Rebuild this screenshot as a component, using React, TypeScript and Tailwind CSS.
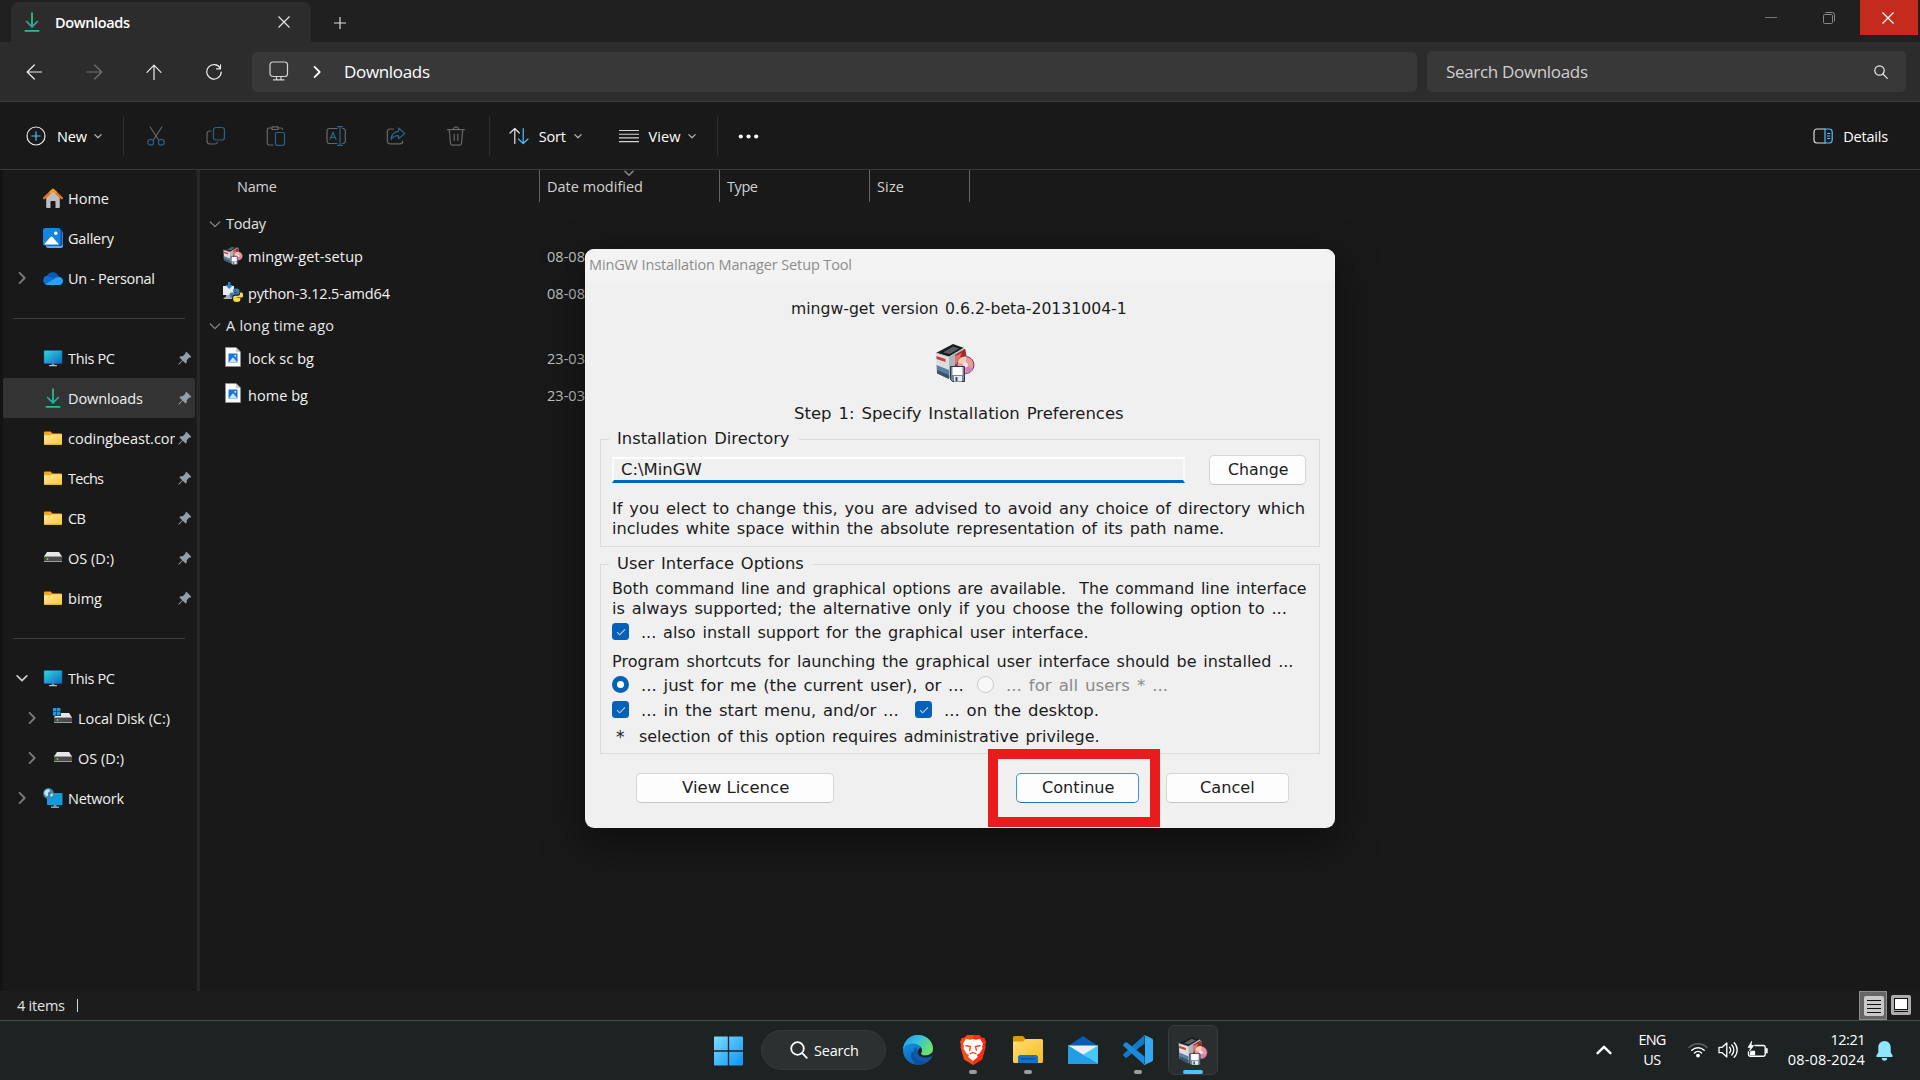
import React, { useLayoutEffect, useRef, useState } from "react";

/* Text tracked so that it spans exactly `w` pixels. */
function T({ w, className = "", children }: { w: number; className?: string; children: string }) {
  const ref = useRef<HTMLSpanElement>(null);
  const [spacing, setSpacing] = useState(0);
  useLayoutEffect(() => {
    const el = ref.current;
    if (!el) return;
    el.style.letterSpacing = "0px";
    const natural = el.getBoundingClientRect().width;
    const next = (w - natural) / Math.max(1, children.length - 1);
    el.style.letterSpacing = `${next}px`;
    setSpacing(next);
  }, [w, children]);
  return (
    <span ref={ref} className={`inline-block shrink-0 whitespace-pre ${className}`} style={{ letterSpacing: spacing }}>
      {children}
    </span>
  );
}

/* Text stretched horizontally to `w` pixels, as legacy dialogs are when scaled. */
function S({ w, className = "", children }: { w: number; className?: string; children: string }) {
  const ref = useRef<HTMLSpanElement>(null);
  const [scale, setScale] = useState(1);
  useLayoutEffect(() => {
    if (ref.current) setScale(w / ref.current.offsetWidth);
  }, [w, children]);
  return (
    <span className={`flex shrink-0 ${className}`} style={{ width: w }}>
      <span ref={ref} className="inline-block shrink-0 origin-left whitespace-pre" style={{ transform: `scaleX(${scale})` }}>
        {children}
      </span>
    </span>
  );
}

type IconProps = { className?: string };

const line = { fill: "none", strokeLinecap: "round", strokeLinejoin: "round" } as const;

function DownloadIcon({ className = "" }: IconProps) {
  return (
    <svg viewBox="0 0 16 20" className={`h-5 w-4 shrink-0 ${className}`} {...line} strokeWidth="1.7">
      <path d="M8 1v13.5" stroke="#2cc68c" />
      <path d="M2.6 9.5L8 14.8l5.4-5.3" stroke="#1fb39c" />
      <path d="M1.4 18.9h13.2" stroke="#25c193" />
    </svg>
  );
}

function Chevron({ className = "", dir = "down", size = 8 }: IconProps & { dir?: "down" | "right" | "up"; size?: number }) {
  const d = dir === "down" ? "M1 3.2L5 7.2L9 3.2" : dir === "up" ? "M1 7L5 3L9 7" : "M3 0.8L7.2 5L3 9.2";
  return (
    <svg viewBox="0 0 10 10" width={size} height={size} className={`shrink-0 ${className}`} {...line} stroke="currentColor" strokeWidth="1.5">
      <path d={d} />
    </svg>
  );
}

function CloseGlyph({ className = "" }: IconProps) {
  return (
    <svg viewBox="0 0 12 12" className={`h-3 w-3 shrink-0 ${className}`} stroke="currentColor" strokeWidth="1.2" fill="none">
      <path d="M.5.5l11 11M11.5.5l-11 11" />
    </svg>
  );
}

function HomeIcon() {
  return (
    <svg viewBox="0 0 20 20" className="h-5 w-5">
      <path d="M3.2 9.5L10 3l6.8 6.5V19a1 1 0 0 1-1 1h-3.300v-6.200a.8.800 0 0 0-.8-.8H8.300a.8.800 0 0 0-.8.8V20H4.200a1 1 0 0 1-1-1z" fill="#bdbdbd" />
      <path d="M1.200 10.200L10 1.800l8.800 8.400" fill="none" stroke="#e8701e" strokeWidth="2.400" strokeLinecap="round" strokeLinejoin="round" />
      <path d="M6.500 5L10 1.800 13.500 5" fill="none" stroke="#f89c22" strokeWidth="2.200" strokeLinejoin="round" />
    </svg>
  );
}

function GalleryIcon() {
  return (
    <svg viewBox="0 0 20 20" className="h-5 w-5">
      <rect x="3" y="3" width="17" height="17" rx="2" fill="#6aa7e8" />
      <rect x="3" y="2" width="16.500" height="16" rx="2" fill="#0b4fa3" />
      <rect x="0" y="0" width="17.500" height="17.500" rx="2" fill="#1286dc" />
      <path d="M1 16.500L7.500 9a1.500 1.500 0 0 1 2 0l6.500 7.500z" fill="#fff" />
      <circle cx="12.800" cy="5.300" r="1.700" fill="#fff" />
    </svg>
  );
}

function CloudIcon() {
  return (
    <svg viewBox="0 0 20 15" className="h-[15px] w-5">
      <path d="M5 14a4.700 4.700 0 0 1-1-9.300A6.500 6.500 0 0 1 15.500 5.500 4.200 4.200 0 0 1 16 14z" fill="#0f6fd0" />
      <path d="M4 4.700A6.500 6.500 0 0 1 15.500 5.500c-2-.2-3.500.6-4.500 1.500z" fill="#0a58b8" />
      <path d="M2.500 13.200L12 7.500c2.300-1.500 5.600-1.700 7 .6 1.800 3 .2 5.900-3 5.900H5c-1 0-1.800-.3-2.500-.8z" fill="#28a4ee" />
    </svg>
  );
}

function PcIcon() {
  return (
    <svg viewBox="0 0 20 17" className="h-[17px] w-5">
      <defs>
        <linearGradient id="pc" x1="0" y1="0" x2="1" y2="1">
          <stop offset="0" stopColor="#35d6e0" />
          <stop offset="1" stopColor="#0b6bc4" />
        </linearGradient>
      </defs>
      <rect x="1" y="0.500" width="18" height="13" rx="0.800" fill="url(#pc)" stroke="#0d6aa8" strokeWidth="0.600" />
      <path d="M8.500 13.500h3v1.700h-3z" fill="#7b8a94" />
      <rect x="6" y="15" width="8" height="1.300" rx=".4" fill="#b3bcc4" />
    </svg>
  );
}

function FolderIcon() {
  return (
    <svg viewBox="0 0 20 16" className="h-4 w-5">
      <defs>
        <linearGradient id="fd" x1="0" y1="0" x2="1" y2="1">
          <stop offset="0" stopColor="#ffe9a0" />
          <stop offset="1" stopColor="#fcc63a" />
        </linearGradient>
      </defs>
      <path d="M1 2.500a1 1 0 0 1 1-1h5.500L9.500 3.500H18a1 1 0 0 1 1 1V13H1z" fill="#f0ab16" />
      <path d="M1 5.200h7l1.500-1H18a1 1 0 0 1 1 1V14a1 1 0 0 1-1 1H2a1 1 0 0 1-1-1z" fill="url(#fd)" />
      <path d="M1 14.400h18" stroke="#e5a91e" strokeWidth="0.900" />
    </svg>
  );
}

function DriveIcon({ windows = false }: { windows?: boolean }) {
  return (
    <svg viewBox="0 0 20 18" className={`h-[18px] w-5 ${windows ? "-mt-1" : "-mt-1.5"}`}>
      <path d="M4 6h12l3 4.500H1z" fill="#e6e6e6" />
      <rect x="1" y="10" width="18" height="6" rx="0.800" fill="#4a4a4a" />
      <path d="M1 10.500h18M1 15.500h18" stroke="#a8a8a8" strokeWidth="0.900" />
      <circle cx="4.500" cy="13" r="0.900" fill="#4ade60" />
      {windows && (
        <g>
          <path d="M0 1h8v8H0z" fill="#191919" />
          <path d="M0 1h3.400v3.400H0zM4 1h3.400v3.400H4zM0 5h3.400v3.400H0zM4 5h3.400v3.400H4z" fill="#1c9ae8" />
        </g>
      )}
    </svg>
  );
}

function NetworkIcon() {
  return (
    <svg viewBox="0 0 20 20" className="h-5 w-5">
      <rect x="4" y="5" width="15.500" height="12" rx="0.800" fill="#149bd4" />
      <path d="M10.500 17h3v1.800h-3z" fill="#7b8a94" />
      <rect x="8" y="18.600" width="8" height="1.200" fill="#b3bcc4" />
      <circle cx="5.500" cy="5.500" r="5.400" fill="#3a86b4" />
      <path d="M1.500 3.500C3.500.5 7 1 7 2.500S4.500 4 5 6s-1 3-2 2-2.500-3-1.500-4.500zM8 6c1-1 2.500-.5 2 .8S8 9.500 7.500 8.500 7 7 8 6z" fill="#c6e2ee" />
    </svg>
  );
}

function PinIcon() {
  return (
    <svg viewBox="0 0 14 14" className="h-3.5 w-3.5" fill="#959ea4">
      <path d="M8.400.8L13.200 5.600 12.300 6.700 11.400 6.500 8.900 9l-.3 2.700-1 .9L4.700 9.700 1.200 13.400.5 13.500.6 12.800 4.300 9.300 1.400 6.400l.9-1L5 5.100 7.500 2.600 7.300 1.700z" />
    </svg>
  );
}

function SetupIcon({ className = "" }: IconProps) {
  return (
    <svg viewBox="0 0 40 40" className={className}>
      <path d="M13 14L29 5l2 2v20L13 36z" fill="#aeb4bb" />
      <path d="M1 10L14 14v22L2 30z" fill="#dcdee2" />
      <path d="M1 10L18 1l11 4-15 9z" fill="#1a1c1f" />
      <path d="M8 9.500L18 3.500l6 2-9 5.500z" fill="#5a5e62" />
      <path d="M1 10l13 4 15-9" fill="none" stroke="#c9ccd0" strokeWidth="1" />
      <path d="M1.500 13l9 3v3l-9-3z" fill="#d63a36" />
      <path d="M1.500 22l12.500 5v9L2 30z" fill="#5f7f9f" />
      <path d="M2 27l12 5v4L2 30.500z" fill="#3b556f" />
      <path d="M20 12l10-6 2 9-6 9-6 0z" fill="#a6272c" />
      <path d="M20 13l7-3-2 4 4 0-6 8-3-1z" fill="#e2746a" />
      <circle cx="30.500" cy="22" r="8.500" fill="#e79aa2" stroke="#6c3a44" strokeWidth="1" />
      <path d="M30.500 22l-8-3a8.500 8.500 0 0 1 9-5.500z" fill="#f6cdb2" />
      <path d="M30.500 22l7.500 4a8.500 8.500 0 0 1-6 4z" fill="#cf7fc0" />
      <circle cx="30.500" cy="22" r="2.500" fill="#f6e4ea" />
      <path d="M15.500 23.500h14v15h-12l-2-2z" fill="#74879a" stroke="#2c3843" strokeWidth="1" />
      <path d="M17.500 24h10v8h-10z" fill="#fff" />
      <path d="M19 33h8v5.500h-8z" fill="#e8ebee" />
      <path d="M20.500 34h2v4h-2z" fill="#3a4c60" />
    </svg>
  );
}

function PythonIcon() {
  return (
    <svg viewBox="0 0 20 20" className="h-5 w-5">
      <path d="M0 4h11v9H0z" fill="#e8ecef" />
      <path d="M2 15h7v2H0zM3 13h4v2H3z" fill="#aab0b5" />
      <path d="M5 0h2.500v3H10L6.200 7 2.500 3H5z" fill="#1d86d0" />
      <path d="M12.500 6.500c-2 0-2.500.8-2.500 2V10h4v.6H8.500C7 10.600 6.500 12 6.500 13.300S7.200 16 8.500 16h1v-1.500c0-1.200 1-2 2.200-2h3c1 0 1.800-.8 1.800-1.800V8.500c0-1.500-1.300-2-4-2z" fill="#3b7db4" />
      <path d="M17 10.500v1.300c0 1.300-1 2-2 2h-3c-1 0-1.800.7-1.800 1.700v2.200c0 1.300 1.300 2.300 3.600 2.300s3.500-.8 3.500-2V16h-3.500v-.6H19c1 0 1-1 1-2.300 0-1.600-.4-2.600-1.500-2.600z" fill="#fbd848" />
    </svg>
  );
}

function ImageFileIcon() {
  return (
    <svg viewBox="0 0 16 20" className="h-5 w-4">
      <path d="M.5.5h10.500l4.500 4.500v14.500H.5z" fill="#fafafa" stroke="#8e8e8e" strokeWidth="0.900" />
      <path d="M11 .5V5h4.500z" fill="#c9c9c9" />
      <rect x="3.500" y="6.500" width="9" height="9" rx="0.600" fill="#1677d6" />
      <path d="M4 15.200l3.500-4.500a.7.700 0 0 1 1 0l3.700 4.500z" fill="#cfe6fa" />
      <circle cx="10.300" cy="8.800" r="0.900" fill="#fff" />
    </svg>
  );
}

type SideItem = { label: string; w: number; icon: React.ReactNode; pin?: boolean; nested?: boolean; chevron?: "right" | "down"; selected?: boolean };

const quick: SideItem[] = [
  { label: "Home", w: 41, icon: <HomeIcon /> },
  { label: "Gallery", w: 46, icon: <GalleryIcon /> },
  { label: "Un - Personal", w: 87, icon: <CloudIcon />, chevron: "right" },
];
const pinned: SideItem[] = [
  { label: "This PC", w: 47, icon: <PcIcon />, pin: true },
  { label: "Downloads", w: 75, icon: <DownloadIcon />, pin: true, selected: true },
  { label: "codingbeast.com", w: 115, icon: <FolderIcon />, pin: true },
  { label: "Techs", w: 36, icon: <FolderIcon />, pin: true },
  { label: "CB", w: 18, icon: <FolderIcon />, pin: true },
  { label: "OS (D:)", w: 46, icon: <DriveIcon />, pin: true },
  { label: "bimg", w: 34, icon: <FolderIcon />, pin: true },
];
const tree: SideItem[] = [
  { label: "This PC", w: 47, icon: <PcIcon />, chevron: "down" },
  { label: "Local Disk (C:)", w: 92, icon: <DriveIcon windows />, nested: true, chevron: "right" },
  { label: "OS (D:)", w: 46, icon: <DriveIcon />, nested: true, chevron: "right" },
  { label: "Network", w: 56, icon: <NetworkIcon />, chevron: "right" },
];

function SideRow({ item }: { item: SideItem }) {
  return (
    <div className={`flex h-10 w-48 items-center ${item.selected ? "rounded-xs bg-[#333333]" : ""} ${item.nested ? "pl-[10px]" : ""}`}>
      <div className="flex w-10 shrink-0 items-center justify-center pr-[3px]">
        {item.chevron && <Chevron dir={item.chevron} size={12} className={item.chevron === "down" ? "text-[#c8c8c8]" : "text-[#7d7d7d]"} />}
      </div>
      <div className="flex w-5 shrink-0 items-center justify-center">{item.icon}</div>
      <div className={`mt-[2px] ml-[5px] flex overflow-hidden ${item.pin ? "w-[107px]" : ""}`}>
        <T w={item.w}>{item.label}</T>
      </div>
      {item.pin && (
        <div className="ml-[3px]">
          <PinIcon />
        </div>
      )}
    </div>
  );
}

function SideDivider() {
  return (
    <div className="flex h-10 items-center pl-[10px]">
      <div className="h-px w-[172px] bg-[#3c3c3c]" />
    </div>
  );
}

function GroupRow({ label, w }: { label: string; w: number }) {
  return (
    <div className="flex h-7 items-center pl-[9px] text-[#e4e4e4]">
      <Chevron size={12} className="text-[#8e8e8e] [stroke-width:1]" />
      <T w={w} className="ml-[5px]">{label}</T>
    </div>
  );
}

function FileRow({ icon, label, w, date, height = "h-[36.5px]" }: { icon: React.ReactNode; label: string; w: number; date: string; height?: string }) {
  return (
    <div className={`flex items-center pl-[23px] ${height}`}>
      <div className="mb-[3px] flex w-5 justify-center">{icon}</div>
      <div className="mt-[2px] ml-[5px] w-[299px] text-[#f2f2f2]">
        <T w={w}>{label}</T>
      </div>
      <T w={38} className="mt-[2px] text-[#c0c0c0]">{date}</T>
    </div>
  );
}

function HeaderCell({ width, label, w }: { width: string; label: string; w: number }) {
  return (
    <div className={`flex h-8 items-center border-r border-[#636363] pl-[7px] text-[#d2d2d2] ${width}`}>
      <T w={w} className="mt-px">{label}</T>
    </div>
  );
}

function Separator({ className = "" }: IconProps) {
  return <div className={`h-10 w-px shrink-0 bg-[#2e2e2e] ${className}`} />;
}

function ToolIcon({ children, className = "" }: { children: React.ReactNode; className?: string }) {
  return (
    <svg viewBox="0 0 20 20" className={`h-5 w-5 shrink-0 ${className}`} {...line} strokeWidth="1.2">
      {children}
    </svg>
  );
}

const dim = "#666666";
const dimBlue = "#2c6183";

function CommandBar() {
  return (
    <div className="flex h-[68px] items-center border-b border-[#3a3a3a] bg-[#191919] pt-px pl-[26px] text-white">
      <ToolIcon>
        <circle cx="10" cy="10" r="9" stroke="#e6e6e6" />
        <path d="M10 5.800v8.400M5.800 10h8.400" stroke="#4cc2ff" />
      </ToolIcon>
      <T w={30} className="mt-px ml-[11px]">New</T>
      <Chevron className="ml-[7px] text-[#b5b5b5]" />
      <Separator className="ml-[21px]" />
      <ToolIcon className="ml-[22px]">
        <path d="M4.200 1L12.600 14M15.800 1L7.400 14" stroke={dim} />
        <circle cx="4.700" cy="16.300" r="2.900" stroke={dimBlue} />
        <circle cx="15.300" cy="16.300" r="2.900" stroke={dimBlue} />
      </ToolIcon>
      <ToolIcon className="ml-10">
        <path d="M5 5H3.500A2.500 2.500 0 0 0 1 7.500V15a3 3 0 0 0 3 3h5a2.500 2.500 0 0 0 2.500-2" stroke={dim} />
        <rect x="7.500" y="1.500" width="11" height="12.500" rx="2.500" stroke={dimBlue} />
      </ToolIcon>
      <ToolIcon className="ml-10">
        <path d="M7 19H3a1.700 1.700 0 0 1-1.700-1.700V3.700A1.700 1.700 0 0 1 3 2h2.500M12.500 2H15a1.700 1.700 0 0 1 1.600 1.500M6 .8h6v2.700H6z" stroke={dim} />
        <rect x="9.500" y="6.500" width="9" height="12.800" rx="1.500" stroke={dimBlue} />
      </ToolIcon>
      <ToolIcon className="ml-10">
        <path d="M11 2.500H3.500A2.500 2.500 0 0 0 1 5v10a2.500 2.500 0 0 0 2.500 2.500H11M16.500 2.500A2.500 2.500 0 0 1 19.300 5v10a2.500 2.500 0 0 1-2.800 2.500" stroke={dim} />
        <path d="M4 13.500L7 6.200l3 7.300M5 11.300h4M11.500.6h5M11.500 19.400h5M14 .6v18.800" stroke={dimBlue} />
      </ToolIcon>
      <ToolIcon className="ml-10">
        <path d="M7.500 3H4a2.700 2.700 0 0 0-2.700 2.700V15A2.700 2.700 0 0 0 4 17.800h10a2.700 2.700 0 0 0 2.700-2.600" stroke={dim} />
        <path d="M12.500 2l6.300 5.500-6.300 5.300V9.700C9 9.600 6.800 10.800 5 13.300 5.500 9 8 5.800 12.500 5.400z" stroke={dimBlue} />
      </ToolIcon>
      <ToolIcon className="ml-10">
        <path d="M1.500 3.700h17M7.500 3.500A2.500 2.500 0 0 1 12.500 3.500M3.300 4l1.200 13.300a2 2 0 0 0 2 1.900h7a2 2 0 0 0 2-1.900L16.700 4M8.200 8v6.500M11.800 8v6.500" stroke={dim} />
      </ToolIcon>
      <Separator className="ml-[23px]" />
      <ToolIcon className="ml-[19px]">
        <path d="M5.800 17.500V2.500M1 7L5.800 2.500 10.300 7" stroke="#e6e6e6" />
        <path d="M14.200 2.500v15M9.500 13l4.700 4.500L19 13" stroke="#4cc2ff" />
      </ToolIcon>
      <T w={27} className="mt-px ml-[10px]">Sort</T>
      <Chevron className="ml-[8px] text-[#b5b5b5]" />
      <svg viewBox="0 0 20 14" className="ml-[37px] h-3.5 w-5 shrink-0" stroke="#d4d4d4" strokeWidth="1.100">
        <path d="M0 1.500h20M0 5.200h20M0 8.900h20M0 12.600h20" />
      </svg>
      <T w={32} className="mt-px ml-[10px]">View</T>
      <Chevron className="ml-[7px] text-[#b5b5b5]" />
      <Separator className="ml-[21px]" />
      <svg viewBox="0 0 21 5" className="ml-[20px] h-[5px] w-[21px] shrink-0" fill="#fff">
        <circle cx="2.800" cy="2.500" r="2.100" />
        <circle cx="10.500" cy="2.500" r="2.100" />
        <circle cx="18.200" cy="2.500" r="2.100" />
      </svg>
      <div className="ml-auto flex items-center pr-[32px]">
        <ToolIcon>
          <path d="M12 3H4a3 3 0 0 0-3 3v8a3 3 0 0 0 3 3h8" stroke="#dcdcdc" />
          <path d="M12 3h4a3 3 0 0 1 3.200 3v8a3 3 0 0 1-3.200 3h-4zM14.500 7.500h2.300M14.500 10h2.300M14.500 12.500h2.300" stroke="#4cc2ff" />
        </ToolIcon>
        <T w={45} className="mt-px ml-[10px]">Details</T>
      </div>
    </div>
  );
}

function CheckBox() {
  return (
    <div className="flex h-[17px] w-[17px] shrink-0 items-center justify-center rounded-[3.5px] bg-[#0560b8]">
      <svg viewBox="0 0 10 8" className="h-2 w-2.5" fill="none" stroke="#b9d4ee" strokeWidth="1.100">
        <path d="M1 4.200l2.700 2.600L9 1.300" />
      </svg>
    </div>
  );
}

function DialogButton({ label, w, className }: { label: string; w: number; className: string }) {
  return (
    <button className={`flex shrink-0 items-center justify-center rounded-[5px] border bg-[#fdfdfd] ${className}`}>
      <S w={w}>{label}</S>
    </button>
  );
}

function Dialog() {
  return (
    <div className="absolute top-[249px] left-[585px] h-[579px] w-[750px] rounded-[9px] bg-[#f0f0f0] font-['DejaVu_Sans',sans-serif] text-[15px] leading-5 text-[#1c1c1c] shadow-[0_14px_40px_rgba(0,0,0,0.5)]">
      <div className="flex h-8 items-center rounded-t-[9px] bg-[#f3f3f3] pl-1 font-['Open_Sans',sans-serif] text-[14.500px] text-[#8d8d8d]">
        <T w={263}>MinGW Installation Manager Setup Tool</T>
      </div>
      <div className="[word-spacing:1.5px]">
        <div className="flex h-[55px] items-center pl-[206px]">
          <S w={336}>mingw-get version 0.6.2-beta-20131004-1</S>
        </div>
        <div className="mt-[7px] flex h-10 pl-[350px]">
          <SetupIcon className="h-10 w-10" />
        </div>
        <div className="mt-4 flex h-[30px] items-center pl-[209px]">
          <S w={330}>Step 1: Specify Installation Preferences</S>
        </div>
        <fieldset className="mx-[15px] h-[118px] border border-[#dcdcdc]">
          <legend className="ml-2 flex h-5 w-[190px] px-2">
            <S w={172}>Installation Directory</S>
          </legend>
          <div className="mt-[6px] flex pl-[11px]">
            <div className="mt-[2px] flex h-[26px] w-[573px] items-center border-t-2 border-r-2 border-b-[3px] border-l-2 border-t-white border-r-[#f8f9fb] border-b-[#0067c0] border-l-[#f8f9fb] pl-[7px]">
              <S w={81} className="mt-px">C:\MinGW</S>
            </div>
            <DialogButton label="Change" w={60} className="ml-6 h-[30px] w-[97px] border-[#d6d6d6] border-b-[#c4c4c4]" />
          </div>
          <div className="mt-[14px] flex flex-col pl-[11px]">
            <S w={693}>If you elect to change this, you are advised to avoid any choice of directory which</S>
            <S w={612}>includes white space within the absolute representation of its path name.</S>
          </div>
        </fieldset>
        <fieldset className="mx-[15px] mt-[7px] h-[200px] border border-[#dcdcdc] pl-[11px]">
          <legend className="-ml-[3px] flex h-5 w-[204px] px-2">
            <S w={187}>User Interface Options</S>
          </legend>
          <div className="mt-[5px] flex flex-col">
            <S w={695}>Both command line and graphical options are available.  The command line interface</S>
            <S w={675}>is always supported; the alternative only if you choose the following option to ...</S>
          </div>
          <div className="mt-1 flex h-5">
            <CheckBox />
            <S w={448} className="ml-3">... also install support for the graphical user interface.</S>
          </div>
          <div className="mt-[9px] flex h-5">
            <S w={682}>Program shortcuts for launching the graphical user interface should be installed ...</S>
          </div>
          <div className="mt-1 flex h-5">
            <div className="flex h-[17px] w-[17px] shrink-0 items-center justify-center rounded-full bg-[#0560b8]">
              <div className="h-[7px] w-[7px] rounded-full bg-white" />
            </div>
            <div className="ml-3 w-[336px]">
              <S w={323}>... just for me (the current user), or ...</S>
            </div>
            <div className="h-[17px] w-[17px] shrink-0 rounded-full border border-[#c8c8c8] bg-[#f8f8f8]" />
            <S w={162} className="ml-3 text-[#8b8b8b]">... for all users * ...</S>
          </div>
          <div className="mt-[5px] flex h-5">
            <CheckBox />
            <div className="ml-3 w-[274px]">
              <S w={258}>... in the start menu, and/or ...</S>
            </div>
            <CheckBox />
            <S w={155} className="ml-3">... on the desktop.</S>
          </div>
          <div className="mt-1.5 flex h-5">
            <span className="ml-1 w-[23px] shrink-0 text-[17px]">*</span>
            <S w={461}>selection of this option requires administrative privilege.</S>
          </div>
        </fieldset>
        <div className="mt-[19px] flex">
          <DialogButton label="View Licence" w={107} className="ml-[51px] h-[30px] w-[198px] border-[#d6d6d6] border-b-[#c4c4c4]" />
          <DialogButton label="Continue" w={72} className="ml-[182px] h-[30px] w-[123px] border-[#3f97dd] border-b-[#1b74c0]" />
          <DialogButton label="Cancel" w={55} className="ml-[27px] h-[30px] w-[123px] border-[#d6d6d6] border-b-[#c4c4c4]" />
        </div>
      </div>
      <div className="absolute top-[500px] left-[403px] h-[78px] w-[172px] border-10 border-[#e81c1c]" />
    </div>
  );
}

function TaskApp({ children, className = "", dot = "" }: { children: React.ReactNode; className?: string; dot?: string }) {
  return (
    <div className={`flex h-[50px] w-[50px] shrink-0 flex-col items-center rounded-md pt-[9px] ${className}`}>
      <div className="flex h-[32px] w-[30px] items-center justify-center">{children}</div>
      {dot && <div className={`mt-[4px] h-1 rounded-full ${dot}`} />}
    </div>
  );
}

function Taskbar() {
  const running = "w-2 bg-[#9a9d9d]";
  return (
    <div className="flex h-[60px] w-full items-start border-t border-[#474a4a] bg-[#1d2323] pt-1 text-white">
      <svg viewBox="0 0 30 30" className="mt-[11px] ml-[714px] h-[30px] w-[29px] shrink-0">
        <defs>
          <linearGradient id="win" x1="0" y1="0" x2="1" y2="1">
            <stop offset="0" stopColor="#7fdcff" />
            <stop offset="1" stopColor="#0a94f8" />
          </linearGradient>
        </defs>
        <path d="M1 0h13.300v14.300H0V1a1 1 0 0 1 1-1zM15.700 0H29a1 1 0 0 1 1 1v13.300H15.700zM0 15.700h14.300V30H1a1 1 0 0 1-1-1zM15.700 15.700H30V29a1 1 0 0 1-1 1H15.700z" fill="url(#win)" />
      </svg>
      <div className="mt-[5px] ml-[18px] flex h-10 w-[125px] shrink-0 items-center rounded-full border border-[#333838] bg-[#2b3030] pl-[28px]">
        <svg viewBox="0 0 18 18" className="h-[18px] w-[18px] shrink-0" {...line} stroke="#fff" strokeWidth="1.800">
          <circle cx="7.500" cy="7.500" r="6.300" />
          <path d="M12.200 12.200l4.600 4.600" />
        </svg>
        <T w={45} className="mt-[2px] ml-[6px]">Search</T>
      </div>
      <TaskApp className="ml-[7px]">
        <svg viewBox="0 0 30 30" className="h-[30px] w-[30px]">
          <defs>
            <linearGradient id="edgeTop" x1="0" y1="0" x2="1" y2="0.500">
              <stop offset="0" stopColor="#2196e3" />
              <stop offset="0.500" stopColor="#34c1dc" />
              <stop offset="1" stopColor="#6be368" />
            </linearGradient>
            <linearGradient id="edgeLow" x1="0" y1="0" x2="0.600" y2="1">
              <stop offset="0" stopColor="#1a9be8" />
              <stop offset="1" stopColor="#0a5fb8" />
            </linearGradient>
          </defs>
          <circle cx="15" cy="15" r="15" fill="url(#edgeLow)" />
          <path d="M10.500 17c0 6.500 5.500 9.800 11 9.300 2.500-.2 4.800-1.200 6-2A15 15 0 0 1 15 30C10 28.500 7 23 8.500 17.500z" fill="#0d4fa0" />
          <path d="M15 17c0 3.500 3.500 5.200 7 5.200 3 0 6-1.200 8-2.500l-2.500 5c-1.500.9-4 1.800-6.500 1.800-6 0-10.500-4-10.500-9.500 0-2 1-4 3-5z" fill="#1457a8" />
          <path d="M0 14.500C.5 6 7 0 15 0c9 0 15 6.500 15 13.500 0 4.500-3.500 7-7.500 7-3 0-4.500-1-4.500-1.800 0-.7 1-1.200 1-3.200 0-4-4-7-9-7C5 8.500 1.500 11 0 14.500z" fill="url(#edgeTop)" />
          <path d="M14.800 17.500c0-2.500 1.500-4.500 3-5.300 1 1.200 1.300 3 .9 4.500-.2.800-.7 1.300-.7 2 0 .8 1.500 1.800 4.500 1.800 2.500 0 5-1 6.500-3l1 0c0 1-.3 2-1 3.200-3.300 2.500-13.500 3.100-14.200-3.200z" fill="#1d2323" />
        </svg>
      </TaskApp>
      <TaskApp className="ml-[5px]" dot={running}>
        <svg viewBox="0 0 26 30" className="h-[30px] w-[26px]">
          <path d="M7 0h12l3 3 2-.3L26 7l-1 3 .5 2-3.500 12.500L13 30l-9-5.500L.5 12 1 10 0 7l2-4.300L4 3z" fill="#fb4a1c" />
          <path d="M13 0h6l3 3 2-.3L26 7l-1 3 .5 2-3.500 12.500L13 30z" fill="#ff2a12" />
          <path d="M13 4l3 .8 4-1L23 8.500l-1 3 .5 2-3 5-2.500 1.200.8 2.300L13 26l-4.800-4 .8-2.300L6.500 18.500l-3-5 .5-2-1-3L6 3.800l4 1z" fill="#fff" />
          <path d="M5.500 10.500l5 1-1 4.500M20.500 10.500l-5 1 1 4.500M9.500 19l3.500-1.500 3.500 1.500" stroke="#fb3c18" strokeWidth="1.300" fill="none" />
        </svg>
      </TaskApp>
      <TaskApp className="ml-[5px]" dot={running}>
        <svg viewBox="0 0 30 28" className="h-7 w-[30px]">
          <defs>
            <linearGradient id="exp" x1="0" y1="0" x2="1" y2="1">
              <stop offset="0" stopColor="#ffdf72" />
              <stop offset="1" stopColor="#f8b92a" />
            </linearGradient>
          </defs>
          <path d="M0 1.500A1.500 1.500 0 0 1 1.500 0H10l2.500 3H28v5H0z" fill="#dc9a0c" />
          <path d="M0 5.500h10L13 3h15.500A1.500 1.500 0 0 1 30 4.500v21a1.500 1.500 0 0 1-1.500 1.500h-27A1.500 1.500 0 0 1 0 25.500z" fill="url(#exp)" />
          <path d="M5 27v-5.500a2.500 2.500 0 0 1 2.500-2.500h15a2.500 2.500 0 0 1 2.500 2.500V27z" fill="#1273cc" />
          <path d="M8 22.800h14" stroke="#0b4a94" strokeWidth="1.200" />
        </svg>
      </TaskApp>
      <TaskApp className="ml-[5px]">
        <svg viewBox="0 0 30 28" className="h-7 w-[30px]">
          <path d="M0 10L15 0l15 10v4H0z" fill="#0c59b0" />
          <path d="M0 9.500h30V19L15 23 0 18z" fill="#eceff2" />
          <path d="M0 9.500V28h30z" fill="#28a8ea" />
          <path d="M30 9.500V28L15 18.800z" fill="#48c8f2" />
          <path d="M0 9.500L15 18.800 30 28H0z" fill="#239de6" />
        </svg>
      </TaskApp>
      <TaskApp className="ml-[5px]" dot={running}>
        <svg viewBox="0 0 30 30" className="h-[30px] w-[30px]">
          <path d="M21.500 0v8.500L4 22.500a1.300 1.300 0 0 1-1.600 0L.5 20.800a1.200 1.200 0 0 1 0-1.800z" fill="#1479c4" />
          <path d="M21.500 30v-8.500L4 7.500a1.300 1.300 0 0 0-1.600 0L.5 9.200a1.200 1.200 0 0 0 0 1.800z" fill="#1b8ad8" />
          <path d="M21.500 0L29 3.500a1.800 1.800 0 0 1 1 1.600v19.800a1.800 1.800 0 0 1-1 1.600L21.500 30a1.800 1.800 0 0 1-1.500-.5c1 .5 2-.1 2-1V1.500c0-.9-1-1.500-2-1a1.800 1.800 0 0 1 1.500-.5z" fill="#33a9f2" />
        </svg>
      </TaskApp>
      <TaskApp className="ml-[5px] border border-[#363b3b] bg-[#292f2f] pt-[8px]" dot="w-5 bg-[#4cc2ff]">
        <SetupIcon className="h-[30px] w-[30px]" />
      </TaskApp>

      <div className="mr-[27px] ml-auto flex h-[50px] items-center">
        <Chevron dir="up" size={16} className="mb-px text-white" />
        <div className="ml-[25px] flex w-[30px] flex-col items-center leading-[20px]">
          <T w={28}>ENG</T>
          <T w={18}>US</T>
        </div>
        <svg viewBox="0 0 20 16" className="ml-[21px] h-4 w-5 shrink-0" {...line} strokeWidth="1.500">
          <path d="M1 5.500A12.500 12.500 0 0 1 19 5.500" stroke="#5f6464" />
          <path d="M3.800 8.300a8.800 8.800 0 0 1 12.400 0M6.500 11a5 5 0 0 1 7 0" stroke="#fff" />
          <circle cx="10" cy="13.600" r="1.200" fill="#fff" stroke="#fff" />
        </svg>
        <svg viewBox="0 0 20 18" className="ml-[10px] h-[18px] w-5 shrink-0" {...line} stroke="#fff" strokeWidth="1.300">
          <path d="M1 6.300h3.200L8.800 2v14L4.200 11.700H1z" />
          <path d="M11.500 6.300a4 4 0 0 1 0 5.400M13.800 4a7.200 7.200 0 0 1 0 10M16.200 1.700a10.500 10.500 0 0 1 0 14.600" />
        </svg>
        <svg viewBox="0 0 21 18" className="ml-[9px] h-[18px] w-[21px] shrink-0" {...line} stroke="#fff" strokeWidth="1.400">
          <path d="M8 4.500h8.500A1.700 1.700 0 0 1 18.200 6v7.500a1.700 1.700 0 0 1-1.700 1.700H3.200a1.700 1.700 0 0 1-1.700-1.700V11" />
          <path d="M19.800 8v3.500" strokeWidth="1.800" />
          <path d="M4 10.500h3.500v3H3.500z" fill="#fff" />
          <path d="M4.500.5L1 6.500h2.500L2.500 10 6.800 4.500H4.500z" fill="#fff" strokeWidth="0.600" />
        </svg>
        <div className="ml-[19px] flex w-[78px] flex-col items-end leading-[20px]">
          <T w={35}>12:21</T>
          <T w={77}>08-08-2024</T>
        </div>
        <svg viewBox="0 0 17 20" className="mt-px ml-[11px] h-5 w-[17px] shrink-0" fill="#8ce6ff">
          <path d="M8.500 0C4.500 0 2.300 3 2.300 6.500v5L.4 14.600c-.4.700 0 1.400.8 1.400h14.600c.8 0 1.200-.7.8-1.400l-1.900-3.100v-5C14.700 3 12.500 0 8.500 0z" />
          <path d="M5.800 17h5.400a2.700 2.700 0 0 1-5.400 0z" />
        </svg>
      </div>
    </div>
  );
}

function NavIcon({ children, className = "" }: { children: React.ReactNode; className?: string }) {
  return (
    <svg viewBox="0 0 16 16" className={`h-4 w-4 shrink-0 ${className}`} {...line} stroke="currentColor" strokeWidth="1.200">
      {children}
    </svg>
  );
}

export default function App() {
  return (
    <div className="relative flex h-[1080px] w-[1920px] flex-col overflow-hidden bg-[#191919] font-['Open_Sans','Noto_Sans',sans-serif] text-[14.500px] leading-5 text-white">
      <div className="flex h-[42px] shrink-0 bg-[#202020] pl-[11px]">
        <div className="mt-[2px] flex h-10 w-[300px] items-center rounded-t-lg bg-[#2c2c2c] pl-[13px]">
          <DownloadIcon />
          <T w={75} className="mt-px ml-[15px] font-semibold">Downloads</T>
          <CloseGlyph className="ml-[148px] text-[#e4e4e4]" />
        </div>
        <svg viewBox="0 0 12 12" className="mt-[17px] ml-[23px] h-3 w-3" stroke="#dcdcdc" strokeWidth="1.200">
          <path d="M6 0v12M0 6h12" />
        </svg>
        <div className="ml-auto flex h-[35px] items-center">
          <div className="h-px w-3 bg-[#777]" />
          <svg viewBox="0 0 12 12" className="ml-[46px] h-3 w-3" fill="none" stroke="#858585">
            <rect x="0.500" y="2.500" width="9" height="9" rx="1.200" />
            <path d="M2.500.5H9.500a2 2 0 0 1 2 2v7" />
          </svg>
          <div className="ml-[25px] flex h-[35px] w-[58px] items-center justify-center bg-[#c42b1c] pr-[2px]">
            <CloseGlyph />
          </div>
          <div className="h-[35px] w-[2px]" />
        </div>
      </div>

      <div className="flex h-[60px] shrink-0 items-center border-b border-[#3a3a3a] bg-[#2c2c2c] pl-[26px] text-[17px]">
        <NavIcon className="text-[#ececec]">
          <path d="M8.300 1L1.200 8l7.100 7M1.200 8h14.300" />
        </NavIcon>
        <NavIcon className="ml-11 text-[#727272]">
          <path d="M8.700 1l7.100 7-7.100 7M15.800 8H1" />
        </NavIcon>
        <NavIcon className="ml-11 text-[#ececec]">
          <path d="M1 8.300L8 1.200l7 7.100M8 1.200v14.300" />
        </NavIcon>
        <NavIcon className="ml-11 text-[#ececec]">
          <path d="M14.200 4.200A7.200 7.200 0 1 0 15.200 8M14.500.8v4H10.500" />
        </NavIcon>
        <div className="ml-[30px] flex h-10 w-[1165px] items-center rounded-[5px] bg-[#383838] pl-[17px]">
          <svg viewBox="0 0 20 20" className="mb-px h-5 w-5" {...line} stroke="#d4d4d4" strokeWidth="1.200">
            <rect x="1" y="1" width="17.500" height="14.500" rx="2.800" />
            <path d="M7.500 15.500v3M12 15.500v3M4.500 18.800h10.500" />
          </svg>
          <Chevron dir="right" size={12} className="ml-[22px] text-white" />
          <T w={86} className="ml-[21px]">Downloads</T>
        </div>
        <div className="ml-[10px] flex h-[41px] w-[479px] items-center rounded-[5px] bg-[#383838] pl-[19px] text-[#cfcfcf]">
          <T w={142}>Search Downloads</T>
          <svg viewBox="0 0 14 14" className="mr-[18px] ml-auto h-3.5 w-3.5" {...line} stroke="#e8e8e8" strokeWidth="1.200">
            <circle cx="5.500" cy="5.500" r="4.700" />
            <path d="M9 9l4.300 4.300" />
          </svg>
        </div>
      </div>

      <CommandBar />

      <div className="flex h-[821px] shrink-0">
        <div className="w-[3px] shrink-0 bg-[#131313]" />
        <div className="w-[193px] shrink-0 pt-2 text-[#f0f0f0]">
          {quick.map((item) => (
            <SideRow key={item.label} item={item} />
          ))}
          <SideDivider />
          {pinned.map((item) => (
            <SideRow key={item.label} item={item} />
          ))}
          <SideDivider />
          {tree.map((item) => (
            <SideRow key={item.label} item={item} />
          ))}
        </div>
        <div className="w-1 shrink-0 border-l border-[#1f1f1f] bg-[#272727]" />
        <div className="flex-1">
          <div className="flex h-10">
            <HeaderCell width="w-[340px] !pl-[37px]" label="Name" w={40} />
            <div className="relative">
              <HeaderCell width="w-[180px]" label="Date modified" w={96} />
              <Chevron size={10} className="absolute -top-0.5 left-[84px] text-[#8a8a8a]" />
            </div>
            <HeaderCell width="w-[150px]" label="Type" w={31} />
            <HeaderCell width="w-[100px]" label="Size" w={27} />
          </div>
          <GroupRow label="Today" w={40} />
          <FileRow icon={<SetupIcon className="h-5 w-5" />} label="mingw-get-setup" w={115} date="08-08" />
          <FileRow icon={<PythonIcon />} label="python-3.12.5-amd64" w={142} date="08-08" height="h-[37.5px]" />
          <GroupRow label="A long time ago" w={108} />
          <FileRow icon={<ImageFileIcon />} label="lock sc bg" w={66} date="23-03" />
          <FileRow icon={<ImageFileIcon />} label="home bg" w={60} date="23-03" />
        </div>
      </div>

      <div className="flex h-[29px] shrink-0 items-center bg-[#1c1c1c] pl-[17px] text-[#e2e2e2]">
        <T w={48}>4 items</T>
        <div className="ml-3 h-[13px] w-px bg-[#d8d8d8]" />
        <div className="ml-auto flex h-[29px] w-7 items-center justify-center border border-[#8e8e8e] bg-[#666] pt-px pl-px">
          <svg viewBox="0 0 20 20" className="h-5 w-5">
            <rect width="20" height="20" rx="2" fill="#c9c9c9" />
            <path d="M3 4.500h14M3 8.500h14M3 12.500h14M3 16.500h14" stroke="#111" strokeWidth="1.200" />
          </svg>
        </div>
        <svg viewBox="0 0 20 20" className="mr-[9px] mb-[2px] ml-1 h-5 w-5">
          <rect width="20" height="20" rx="2" fill="#adadad" />
          <rect x="3.500" y="3.500" width="13" height="11" fill="#fff" stroke="#111" />
          <path d="M3 16.500h14" stroke="#111" />
        </svg>
      </div>

      <Taskbar />
      <Dialog />
    </div>
  );
}
